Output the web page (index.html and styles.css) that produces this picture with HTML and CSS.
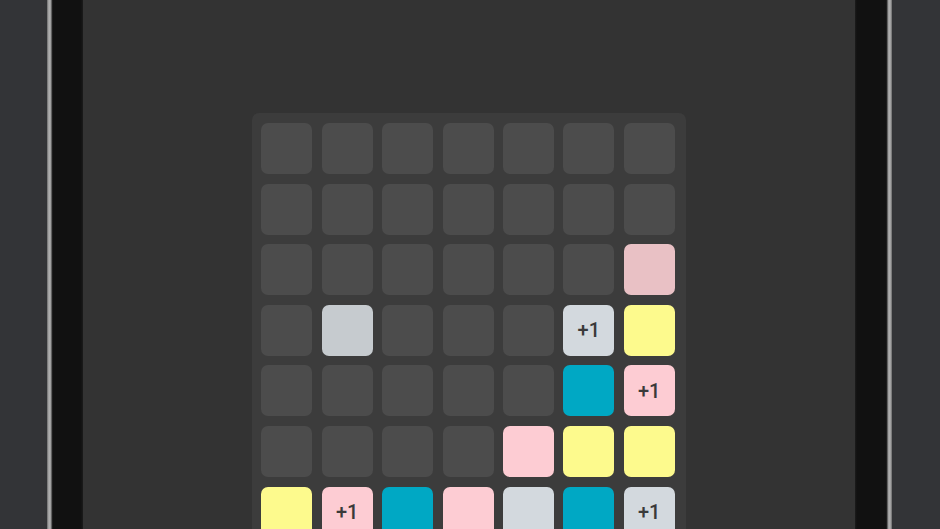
FILE: index.html
```html
<!DOCTYPE html>
<html lang="en">
<head>
    <meta charset="UTF-8">
    <meta name="viewport" content="width=device-width, initial-scale=1.0">
    <title>Blocks</title>
    <link rel="stylesheet" href="styles.css">
</head>
<body>
    <div class="device">
        <div class="side"></div>
        <div class="bezel left"></div>
        <div class="screen">
            <div class="board">
                <!-- row 1 -->
                <div class="cell"></div><div class="cell"></div><div class="cell"></div><div class="cell"></div><div class="cell"></div><div class="cell"></div><div class="cell"></div>
                <!-- row 2 -->
                <div class="cell"></div><div class="cell"></div><div class="cell"></div><div class="cell"></div><div class="cell"></div><div class="cell"></div><div class="cell"></div>
                <!-- row 3 -->
                <div class="cell"></div><div class="cell"></div><div class="cell"></div><div class="cell"></div><div class="cell"></div><div class="cell"></div><div class="cell pink dim"></div>
                <!-- row 4 -->
                <div class="cell"></div><div class="cell grey dim"></div><div class="cell"></div><div class="cell"></div><div class="cell"></div><div class="cell grey">+1</div><div class="cell yellow"></div>
                <!-- row 5 -->
                <div class="cell"></div><div class="cell"></div><div class="cell"></div><div class="cell"></div><div class="cell"></div><div class="cell teal"></div><div class="cell pink">+1</div>
                <!-- row 6 -->
                <div class="cell"></div><div class="cell"></div><div class="cell"></div><div class="cell"></div><div class="cell pink"></div><div class="cell yellow"></div><div class="cell yellow"></div>
                <!-- row 7 -->
                <div class="cell yellow"></div><div class="cell pink">+1</div><div class="cell teal"></div><div class="cell pink"></div><div class="cell grey"></div><div class="cell teal"></div><div class="cell grey">+1</div>
            </div>
        </div>
        <div class="bezel right"></div>
        <div class="side"></div>
    </div>
</body>
</html>
```

FILE: styles.css
```css
html, body {
    margin: 0;
    padding: 0;
    height: 529px;
    overflow: hidden;
    background-color: #333436;
    font-family: Roboto, "Noto Sans", sans-serif;
}
.device {
    display: flex;
    height: 529px;
}
.side {
    width: 47px;
    background-color: #333437;
}
.side:last-child {
    width: 48px;
}
.bezel {
    width: 36px;
    background-color: #111111;
}
.bezel.left {
    background: linear-gradient(to right, #6a6a6a 0, #b4b4b4 2px, #9a9a9a 4px, #2a2a2a 5px, #111111 6px, #111111 34px, #1c1c1c 36px);
}
.bezel.right {
    width: 37px;
    background: linear-gradient(to left, #6a6a6a 0, #b4b4b4 2px, #9a9a9a 4px, #2a2a2a 5px, #111111 6px, #111111 35px, #1c1c1c 37px);
}
.screen {
    flex: 1;
    background-color: #333333;
    display: flex;
    justify-content: center;
    align-items: flex-start;
    padding-top: 113px;
}
.board {
    display: grid;
    grid-template-columns: repeat(7, 51px);
    grid-auto-rows: 51px;
    gap: 9.6px 9.4px;
    padding: 10px 11px 10px 9px;
    background-color: #3c3c3c;
    border-radius: 7px;
}
.cell {
    background-color: #4c4c4c;
    border-radius: 7px;
    display: flex;
    align-items: center;
    justify-content: center;
    font-size: 20px;
    font-weight: 500;
    color: #3a3a3a;
}
.pink {
    background-color: #fdccd3;
}
.pink.dim {
    background-color: #e9c1c5;
}
.yellow {
    background-color: #fdfa8d;
}
.teal {
    background-color: #00a8c4;
}
.grey {
    background-color: #d3d9de;
}
.grey.dim {
    background-color: #c6cbcf;
}
```
